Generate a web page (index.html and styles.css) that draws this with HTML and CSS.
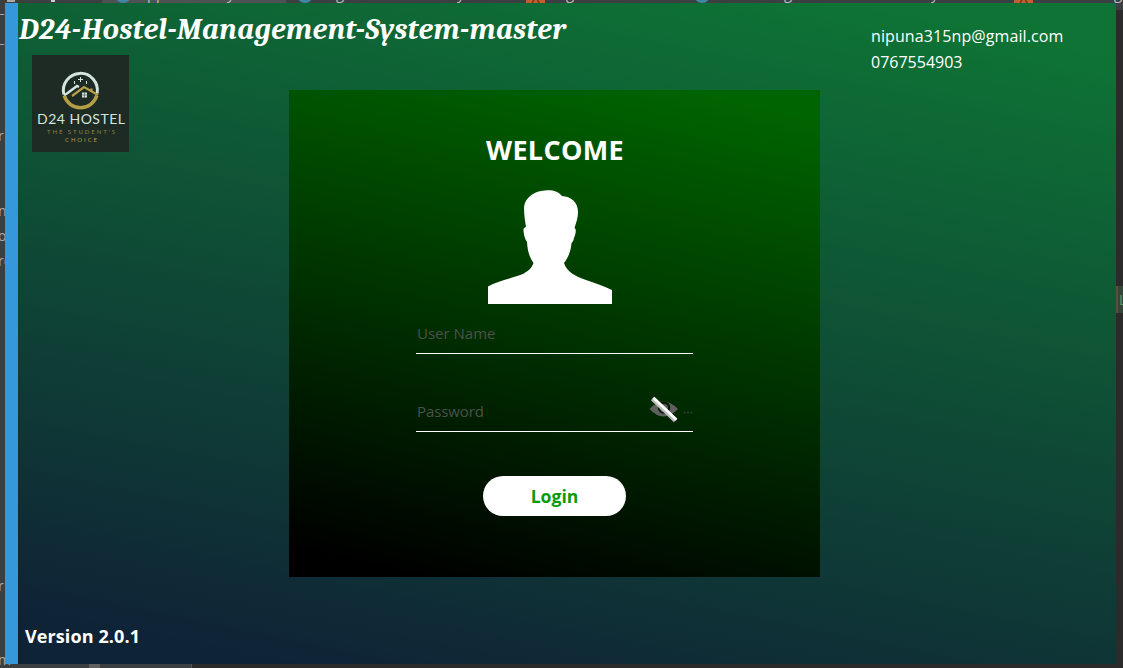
FILE: index.html
```html
<!DOCTYPE html>
<html lang="en">
<head>
<meta charset="utf-8">
<title>D24 Hostel Login</title>
<link rel="stylesheet" href="styles.css">
</head>
<body>
<div class="desktop">
  <div class="tabs">
    <i class="tab-active"></i>
    <i class="grey" style="left:7px"></i><i class="tick" style="left:51px"></i>
    <i class="dot" style="left:115px"></i><i class="dot" style="left:297px"></i><i class="dot" style="left:694px"></i>
    <i class="orange" style="left:526px">‹›</i><i class="orange" style="left:1014px">‹›</i>
    <span style="left:147px">p</span><span style="left:156px">p</span><span style="left:227px">y</span><span style="left:336px">g</span><span style="left:457px">y</span><span style="left:566px">g</span><span style="left:784px">g</span><span style="left:931px">y</span><span style="left:1114px">g</span>
  </div>
  <div class="code">
    <span style="top:-1px">_</span><span style="top:29px">_</span>
    <span style="top:127px">r</span><span style="top:202px">n</span><span style="top:227px">o</span><span style="top:252px">re</span><span style="top:577px">r</span><span style="top:651px">m</span>
  </div>
  <div class="mark">L</div>
  <div class="bottom-tab"></div>
</div>
<main class="window">
  <div class="accent"></div>
  <section class="content">
    <header class="header">
      <div class="brand">
        <h1 class="title">D24-Hostel-Management-System-master</h1>
        <svg class="logo" viewBox="0 0 97 97">
          <rect width="97" height="97" fill="#1e2a24"/>
          <path d="M31.900 39.500A17 17 0 1 1 65.100 38.500" fill="none" stroke="#d3e5dc" stroke-width="3"/>
          <path d="M32.200 40.500A17 17 0 0 0 64.800 40.500" fill="none" stroke="#b59e45" stroke-width="3.500"/>
          <path d="M32 40L35 38.500L45 31L47 32" fill="none" stroke="#d3e5dc" stroke-width="2.500"/>
          <path d="M40 41L52 32L66 40M59.500 36V33.500" fill="none" stroke="#b59e45" stroke-width="2.300"/>
          <path d="M48.500 22v5M46 24.500h5M42.500 26v3M54.500 26v3" stroke="#d3e5dc" stroke-width="1"/>
          <path d="M50 37.500h5v5h-5z" fill="#d3e5dc"/>
          <path d="M52.500 37v6M49.500 40h6" stroke="#56615b" stroke-width=".7"/>
          <text x="5" y="69" textLength="88" class="logo-name">D24 HOSTEL</text>
          <text x="15" y="79" textLength="68" class="logo-tag">THE STUDENT'S</text>
          <text x="33" y="87" textLength="32" class="logo-tag logo-tag-2">CHOICE</text>
        </svg>
      </div>
      <address class="contact"><span class="mail">nipuna315np@gmail.com</span><span class="phone">0767554903</span></address>
    </header>
    <form class="card">
      <h2 class="welcome">WELCOME</h2>
      <svg class="avatar" viewBox="0 0 124 114">
        <path fill="#fff" d="M0 114V96.500C10 91 25 88 36 83.500C39 81 43 80 45.500 73C42 68 39.500 62 39 52C37 49 36 46 35.500 41C35.300 38 36 38 38 37C37 31 36 25 36 17C37 7 47 0.500 59 0.200C66 0 71 2 74 6C83 6.500 90 12 90 22C90 28 88 33 86.500 38C88.500 39 88 43 86 48C85.500 51 84.500 52 83.500 53C83 61 80 68 76 73C79 82 87 86 98 90C108 93 117 97 124 100V114Z"/>
      </svg>
      <div class="field user"><span>User Name</span></div>
      <div class="field pass"><span>Password</span>
        <svg class="eye" viewBox="0 0 46 28">
          <path d="M2.500 14Q16.500-1 31 14Q16.500 29 2.500 14Z" fill="#5f5f5f"/>
          <circle cx="17" cy="12.500" r="6.200" fill="#002000"/>
          <circle cx="17" cy="13" r="4" fill="#5f5f5f"/>
          <path d="M5.500 3.500L28.500 25.500" stroke="#bdbdbd" stroke-width="4.500"/>
          <path d="M6.500 2.800L29.500 24.800" stroke="#fff" stroke-width="2.600"/>
          <path d="M36.500 17.500h9" stroke="#304030" stroke-width="1.500" stroke-dasharray="2 1.500"/>
        </svg>
      </div>
      <button class="login" type="button">Login</button>
    </form>
    <footer class="version"><span>Version 2.0.1</span></footer>
  </section>
</main>
</body>
</html>
```

FILE: styles.css
```css
* { box-sizing: border-box; }
body { margin: 0; width: 1123px; height: 668px; overflow: hidden; background: #2b2b2b; font-family: "Open Sans", "Noto Sans", sans-serif; color: #fff; padding: 3px 7px 4px 5px; }
/* Editor behind the dialog */
.desktop { position: absolute; inset: 0; overflow: hidden; height: 668px; background: linear-gradient(90deg, #3c3f41 191px, #555 191px 192px, #2b2b2b 192px); }
.tabs { position: absolute; top: 0; left: 0; width: 1123px; height: 10px; background: #3c3f41; }
.tabs span, .tabs i { position: absolute; color: #bbb; font: 15px "Open Sans", sans-serif; }
.tabs span { top: -17px; }
.tabs .tab-active { left: 102px; width: 184px; height: 4px; background: #4e5254; }
.tabs .dot { top: -13px; width: 16px; height: 16px; border-radius: 50%; background: #3f87a3; }
.tabs .orange { top: 0; width: 19px; height: 3px; background: #c75f2d; color: #58301d; line-height: 0; text-align: center; overflow: hidden; }
.tabs .grey { width: 8px; height: 2px; background: #aaa; }
.tabs .tick { width: 4px; height: 2px; background: #ccc; }
.code span { position: absolute; left: -2px; color: #aaa; font: 14px/18px "Open Sans", sans-serif; }
.mark { position: absolute; left: 1116px; top: 286px; width: 7px; height: 27px; background: #34463a; border-left: 2px solid #57513b; color: #639a62; font: 14px/28px "Open Sans", sans-serif; padding-left: 1px; }
.bottom-tab { position: absolute; left: 89px; top: 664px; width: 11px; height: 4px; background: #606060; }
/* Dialog */
.window { position: relative; display: flex; width: 1111px; height: 661px; }
.accent { width: 13px; background: #3498db; }
.content { flex: 1; display: flex; flex-direction: column; background: linear-gradient(11.5deg, #0f2336 6%, #0e7335 94%); }
.header { display: flex; height: 87px; }
.brand { width: 853px; padding: 8px 0 0 1px; }
.title { margin: 0; height: 44px; font: italic bold 30px/38px Cambria, Caladea, "Liberation Serif", serif; white-space: nowrap; letter-spacing: .4px; }
.logo { display: block; width: 97px; height: 97px; margin-left: 13px; }
.logo-name { font: 14px "Lato", sans-serif; fill: #d3e5dc; }
.logo-tag { font: 6px "Lato", sans-serif; fill: #8f803c; }
.logo-tag-2 { fill: #b59e45; }
.contact { display: flex; flex-direction: column; padding-top: 20px; font: 16px/26px "Open Sans", sans-serif; }
.mail { letter-spacing: .1px; }
.card { margin: 0 0 0 271px; width: 531px; height: 487px; display: flex; flex-direction: column; align-items: flex-start; background: linear-gradient(13deg, #000 5%, #006400 95%); }
.welcome { margin: 42px 0 0 197px; font: bold 27px/36px "Open Sans", sans-serif; letter-spacing: .3px; white-space: nowrap; }
.avatar { display: block; width: 124px; height: 114px; margin: 22px 0 0 199px; }
.field { margin-left: 127px; width: 277px; border-bottom: 1px solid #fff; display: flex; justify-content: space-between; color: #4c514c; font: 15px/24px "Open Sans", sans-serif; padding-left: 1px; }
.user { margin-top: 17px; height: 33px; }
.pass { margin-top: 44px; height: 34px; padding-top: 1px; }
.pass span { letter-spacing: -.1px; }
.eye { width: 46px; height: 28px; margin-top: -4px; }
.login { margin: 44px 0 0 194px; width: 143px; height: 40px; border: 0; border-radius: 20px; background: #fff; color: #0a9b0a; font: bold 17.6px/24px "Open Sans", sans-serif; padding: 0 0 1px; }
.version { margin: 47px 0 0 7px; font: bold 18px/24px "Open Sans", sans-serif; letter-spacing: .1px; }
```
